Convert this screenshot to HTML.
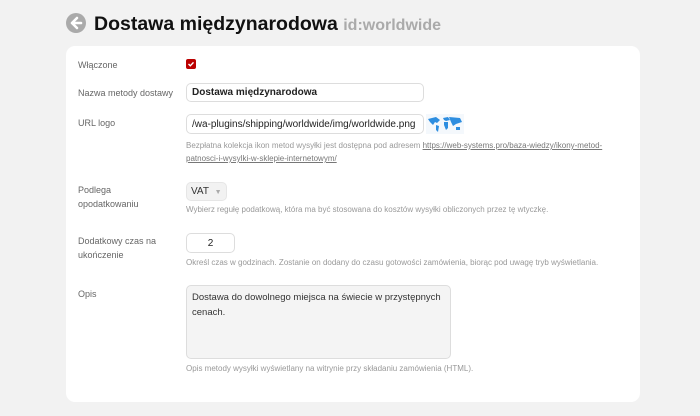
<!DOCTYPE html>
<html><head><meta charset="utf-8"><style>
body{margin:0;width:700px;height:416px;background:#f2f2f2;font-family:"Liberation Sans",sans-serif;position:relative;overflow:hidden}
.a{position:absolute;white-space:nowrap}
.card{position:absolute;left:66px;top:46px;width:574px;height:356px;background:#fff;border-radius:9px}
.lbl{font-size:9px;color:#666;line-height:14px}
.hint{font-size:8px;color:#999;line-height:15px}
.inp{border:1px solid #ddd;border-radius:5px;background:#fff;box-sizing:border-box;font-size:10px;color:#222}
</style></head><body>
<svg class="a" style="left:66px;top:13px" width="20" height="20" viewBox="0 0 20 20"><circle cx="10" cy="10" r="10" fill="#aaa"/><path d="M11 5 L6 10 L11 15 M6 10 H15" stroke="#fff" stroke-width="2.6" fill="none" stroke-linecap="round" stroke-linejoin="round"/></svg>
<div class="a" style="left:94px;top:11px;font-size:19.5px;font-weight:bold;color:#111;line-height:26px">Dostawa międzynarodowa <span style="color:#aaa;font-size:16px">id:worldwide</span></div>
<div class="card"></div>
<div class="a lbl" style="left:78px;top:58px">Włączone</div>
<div class="a" style="left:186px;top:59px;width:10px;height:10px;background:#b00;border-radius:2px"><svg width="10" height="10" style="display:block"><path d="M2.5 5 L4.3 6.8 L7.5 3.4" stroke="#fff" stroke-width="1.4" fill="none"/></svg></div>
<div class="a lbl" style="left:78px;top:86px">Nazwa metody dostawy</div>
<div class="a inp" style="left:186px;top:83px;width:238px;height:19px;font-weight:bold;padding:3px 5px;line-height:12px">Dostawa międzynarodowa</div>
<div class="a lbl" style="left:78px;top:116px">URL logo</div>
<div class="a inp" style="left:186px;top:114px;width:238px;height:20px;padding:4px 5px;line-height:11px">/wa-plugins/shipping/worldwide/img/worldwide.png</div>
<svg class="a" style="left:426px;top:114px" width="38" height="20" viewBox="0 0 38 20"><rect width="38" height="20" fill="#f4f8fc"/><path d="M2 5 L10 3 L14 6 L11 9 L9 8 L7 11 L4 8Z M10 11 L13 12 L12 18 L10 16Z M17 4 L22 3 L24 6 L20 7 L18 6Z M18 8 L22 8 L22 14 L20 16 L18 11Z M23 3 L34 4 L36 8 L30 10 L27 12 L25 8Z M30 13 L34 13 L34 16 L30 16Z" fill="#2e8ee0"/></svg>
<div class="a hint" style="left:186px;top:139px;line-height:13px">Bezpłatna kolekcja ikon metod wysyłki jest dostępna pod adresem <u style="color:#777">https://web-systems.pro/baza-wiedzy/ikony-metod-</u><br><u style="color:#777">patnosci-i-wysylki-w-sklepie-internetowym/</u></div>
<div class="a lbl" style="left:78px;top:183px">Podlega<br>opodatkowaniu</div>
<div class="a" style="left:186px;top:182px;width:41px;height:19px;background:#f2f2f2;border:1px solid #e6e6e6;border-radius:5px;box-sizing:border-box;font-size:10px;color:#333;padding:3px 4px;line-height:12px">VAT <span style="color:#aaa;font-size:7px;margin-left:3px">▼</span></div>
<div class="a hint" style="left:186px;top:202px">Wybierz regułę podatkową, która ma być stosowana do kosztów wysyłki obliczonych przez tę wtyczkę.</div>
<div class="a lbl" style="left:78px;top:234px">Dodatkowy czas na<br>ukończenie</div>
<div class="a inp" style="left:186px;top:233px;width:49px;height:20px;text-align:center;padding:4px 0;line-height:11px">2</div>
<div class="a hint" style="left:186px;top:255px">Określ czas w godzinach. Zostanie on dodany do czasu gotowości zamówienia, biorąc pod uwagę tryb wyświetlania.</div>
<div class="a lbl" style="left:78px;top:287px">Opis</div>
<div class="a" style="left:186px;top:285px;width:265px;height:74px;background:#f4f4f4;border:1px solid #ddd;border-radius:5px;box-sizing:border-box;font-size:9.5px;color:#333;padding:4px 5px;line-height:15px;white-space:normal">Dostawa do dowolnego miejsca na świecie w przystępnych cenach.</div>
<div class="a hint" style="left:186px;top:361px">Opis metody wysyłki wyświetlany na witrynie przy składaniu zamówienia (HTML).</div>
</body></html>
